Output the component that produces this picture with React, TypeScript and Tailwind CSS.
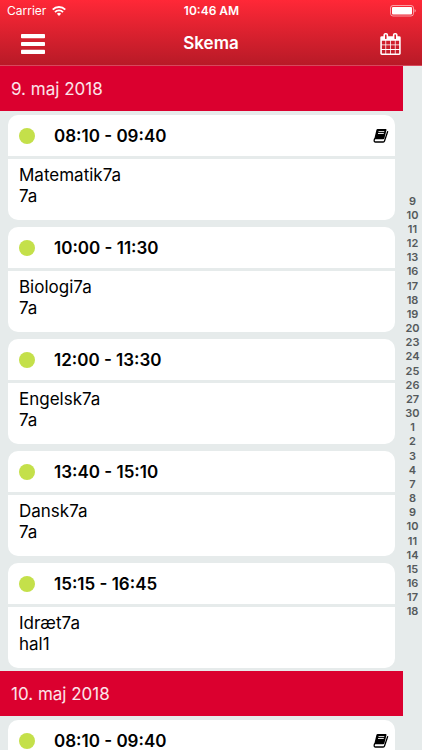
import React from "react";

type Lesson = {
  time: string;
  title?: string;
  room?: string;
  homework?: boolean;
};

type Day = {
  id: string;
  label: string;
  lessons: Lesson[];
};

const days: Day[] = [
  {
    id: "maj-9",
    label: "9. maj 2018",
    lessons: [
      { time: "08:10 - 09:40", title: "Matematik7a", room: "7a", homework: true },
      { time: "10:00 - 11:30", title: "Biologi7a", room: "7a" },
      { time: "12:00 - 13:30", title: "Engelsk7a", room: "7a" },
      { time: "13:40 - 15:10", title: "Dansk7a", room: "7a" },
      { time: "15:15 - 16:45", title: "Idræt7a", room: "hal1" },
    ],
  },
  {
    id: "maj-10",
    label: "10. maj 2018",
    lessons: [{ time: "08:10 - 09:40", homework: true }],
  },
];

const months = [
  { name: "maj", dates: [9, 10, 11, 12, 13, 16, 17, 18, 19, 20, 23, 24, 25, 26, 27, 30] },
  { name: "juni", dates: [1, 2, 3, 4, 7, 8, 9, 10, 11, 14, 15, 16, 17, 18] },
];

function WifiIcon() {
  return (
    <svg viewBox="0 0 28 20" className="h-[10px] w-[14px]" fill="none" stroke="currentColor" strokeWidth="3.8">
      <path d="M1.500 7.200a17.500 17.500 0 0 1 25 0" />
      <path d="M6 12.200a11.200 11.200 0 0 1 16 0" />
      <path d="M14 20l-4.200-4.400a6 6 0 0 1 8.400 0z" fill="currentColor" stroke="none" />
    </svg>
  );
}

function BatteryIcon() {
  return (
    <svg viewBox="0 0 26 12" className="h-3 w-[26px]">
      <rect x="0.500" y="0.500" width="23" height="10.500" rx="2.500" fill="none" stroke="currentColor" strokeOpacity="0.55" />
      <rect x="2" y="2" width="20" height="7.500" rx="1" fill="currentColor" />
      <path d="M24.500 4q1.300.5 1.300 1.800t-1.300 1.800z" fill="currentColor" fillOpacity="0.55" />
    </svg>
  );
}

function MenuIcon() {
  return (
    <svg viewBox="0 0 24 20" className="h-5 w-6" fill="currentColor">
      <rect y="0" width="24" height="4.200" rx="0.800" />
      <rect y="8" width="24" height="4" rx="0.800" />
      <rect y="15.800" width="24" height="4.200" rx="0.800" />
    </svg>
  );
}

function CalendarIcon() {
  return (
    <svg viewBox="64 0 1664 1792" className="h-[22px] w-[21px]" fill="currentColor">
      <path d="M192 1664h288v-288h-288v288zm352 0h320v-288h-320v288zm-352-352h288v-320h-288v320zm352 0h320v-320h-320v320zm-352-384h288v-288h-288v288zm736 736h320v-288h-320v288zm-384-736h320v-288h-320v288zm768 736h288v-288h-288v288zm-384-352h320v-320h-320v320zm-352-864v-288q0-13-9.500-22.500t-22.500-9.500h-64q-13 0-22.500 9.500t-9.500 22.500v288q0 13 9.500 22.500t22.500 9.500h64q13 0 22.500-9.500t9.500-22.500zm736 864h288v-320h-288v320zm-384-384h320v-288h-320v288zm384 0h288v-288h-288v288zm32-480v-288q0-13-9.500-22.500t-22.500-9.500h-64q-13 0-22.500 9.500t-9.500 22.500v288q0 13 9.500 22.500t22.500 9.500h64q13 0 22.500-9.500t9.500-22.500zm384-64v1280q0 52-38 90t-90 38h-1408q-52 0-90-38t-38-90v-1280q0-52 38-90t90-38h128v-96q0-66 47-113t113-47h64q66 0 113 47t47 113v96h384v-96q0-66 47-113t113-47h64q66 0 113 47t47 113v96h128q52 0 90 38t38 90z" />
    </svg>
  );
}

function BookIcon() {
  return (
    <svg viewBox="0 0 16 16" className="h-4 w-4" fill="none" strokeLinecap="round" strokeLinejoin="round">
      <path d="M4.600 1h8.100q1 0 .8 1l-2.100 8.300q-.3 1-1.300 1H1.200L3.400 2q.3-1 1.200-1z" fill="currentColor" />
      <path d="M1.600 10.800q-1.200 3.200.7 3.200h7.900q1 0 1.300-1l3.100-9.300" stroke="currentColor" strokeWidth="1.300" />
      <path d="M5.900 3.600h5M5.400 5.500h5" stroke="white" strokeWidth="0.900" />
    </svg>
  );
}

function LessonCard({ lesson }: { lesson: Lesson }) {
  return (
    <li className="overflow-hidden rounded-[10px] bg-white text-black">
      <div className="flex h-11 items-center border-b-3 border-[#e6ebeb] pl-[11px] pr-[6px]">
        <span className="h-4 w-4 rounded-full bg-[#c4e04a]" />
        <h3 className="ml-[19px] flex-1 pt-[2px] text-[17px] font-semibold">{lesson.time}</h3>
        {lesson.homework && <BookIcon />}
      </div>
      <div className="h-[61px] px-[11px] pt-[6px] text-[17px] leading-[21px]">
        {lesson.title && <p>{lesson.title}</p>}
        {lesson.room && <p>{lesson.room}</p>}
      </div>
    </li>
  );
}

export default function App() {
  return (
    <div className="flex h-screen flex-col overflow-hidden bg-[#e6ebeb] font-['Inter',sans-serif]">
      {/* Navigation bar */}
      <header className="border-b border-[#d8485c] bg-linear-to-b from-[#ff2837] to-[#b81a27] text-white">
        <div className="grid h-[22px] grid-cols-3 items-center pl-[7px] pr-[6px] text-xs">
          <div className="flex items-center gap-[6px]">
            <span>Carrier</span>
            <WifiIcon />
          </div>
          <span className="text-center font-semibold">10:46 AM</span>
          <div className="flex justify-end">
            <BatteryIcon />
          </div>
        </div>
        <div className="grid h-[43px] grid-cols-3 items-center px-[21px]">
          <button aria-label="Menu" className="justify-self-start">
            <MenuIcon />
          </button>
          <h1 className="text-center text-[17px] font-semibold">Skema</h1>
          <button aria-label="Kalender" className="justify-self-end">
            <CalendarIcon />
          </button>
        </div>
      </header>

      <div className="flex min-h-0 flex-1">
        {/* Lessons grouped by day */}
        <main className="flex-1 overflow-hidden">
          {days.map((day) => (
            <section key={day.id} id={day.id}>
              <h2 className="flex h-[45px] items-center bg-[#db002f] px-[11px] pt-[2px] text-[17px] text-white/90">{day.label}</h2>
              <ul className="flex flex-col gap-[7px] px-2 pb-[3px] pt-1">
                {day.lessons.map((lesson) => (
                  <LessonCard key={lesson.time} lesson={lesson} />
                ))}
              </ul>
            </section>
          ))}
        </main>

        {/* Date index */}
        <nav aria-label="Datoer" className="flex w-[19px] flex-col justify-center pb-1">
          <div className="flex h-[425px] flex-col justify-between text-center text-[11px] font-semibold leading-[14px] text-[#555a5c]">
            {months.map((month) =>
              month.dates.map((date) => (
                <a key={`${month.name}-${date}`} href={`#${month.name}-${date}`}>
                  {date}
                </a>
              ))
            )}
          </div>
        </nav>
      </div>
    </div>
  );
}
